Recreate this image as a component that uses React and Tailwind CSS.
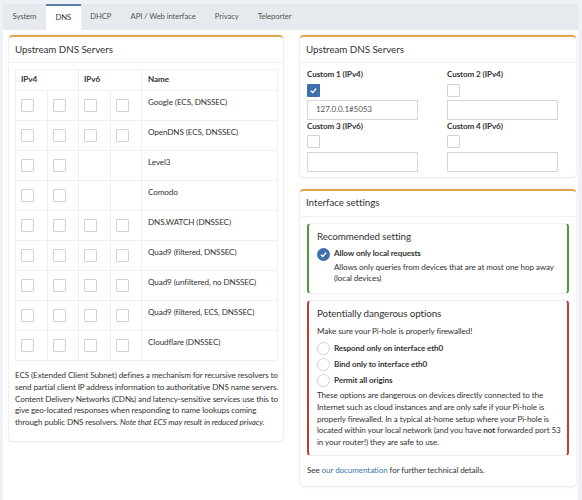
import React from 'react';

const tabs = ['System', 'DNS', 'DHCP', 'API / Web interface', 'Privacy', 'Teleporter'];

const servers = [
  { name: 'Google (ECS, DNSSEC)', v6: true },
  { name: 'OpenDNS (ECS, DNSSEC)', v6: true },
  { name: 'Level3', v6: false },
  { name: 'Comodo', v6: false },
  { name: 'DNS.WATCH (DNSSEC)', v6: true },
  { name: 'Quad9 (filtered, DNSSEC)', v6: true },
  { name: 'Quad9 (unfiltered, no DNSSEC)', v6: true },
  { name: 'Quad9 (filtered, ECS, DNSSEC)', v6: true },
  { name: 'Cloudflare (DNSSEC)', v6: true },
];

const Box = ({ title, children, className = '' }) => (
  <div
    className={`bg-white rounded-[4px] border-t-2 border-[#dea54b] shadow-[0_0_2px_rgba(0,0,0,0.12),0_1px_3px_rgba(0,0,0,0.08)] ${className}`}
  >
    <div className="h-[26px] flex items-center px-[6px] border-b border-[#f0f0f0] text-[9.8px] tracking-[-0.05px] text-[#333]">
      {title}
    </div>
    {children}
  </div>
);

const Tick = () => (
  <svg width="9" height="9" viewBox="0 0 10 10">
    <path d="M2 5.2 L4.2 7.2 L8 2.8" fill="none" stroke="white" strokeWidth="1.4" />
  </svg>
);

const Check = ({ checked }) =>
  checked ? (
    <span className="w-[13px] h-[13px] rounded-[1px] bg-[#3f70ad] flex items-center justify-center">
      <Tick />
    </span>
  ) : (
    <span className="block w-[13px] h-[13px] rounded-[1px] border border-[#d2d2d2] bg-white" />
  );

const Radio = ({ label }) => (
  <div className="flex items-center h-[16px]">
    <span className="w-[13px] h-[13px] rounded-full border border-[#d2d2d2] bg-white" />
    <span className="ml-[4px] font-bold">{label}</span>
  </div>
);

export default function App() {
  return (
    <div className="w-[582px] h-[500px] overflow-hidden bg-[#eef1f5] pt-[4px] pl-[3px] pr-[4px] font-['Lato',sans-serif] text-[8.1px] tracking-[-0.1px] text-[#333] leading-[11.8px]">
      <div className="bg-white h-full">
        {/* tabs */}
        <div className="flex h-[26px] bg-[#e6eaef] text-[7.7px]">
          {tabs.map((t) => (
            <div
              key={t}
              className={`px-[9.6px] flex items-center ${
                t === 'DNS' ? 'bg-white border-t-2 border-[#5a7ea8] text-[#333]' : 'text-[#555]'
              }`}
            >
              {t}
            </div>
          ))}
        </div>

        <div className="flex pl-[6px] pt-[5px] gap-[17px] items-start">
          {/* left column */}
          <Box title="Upstream DNS Servers" className="w-[274px] pb-[12px]">
            <div className="px-[6px] pt-[6px]">
              <table className="table-fixed border-collapse w-[263px]">
                <colgroup>
                  <col className="w-[32px]" />
                  <col className="w-[31px]" />
                  <col className="w-[32px]" />
                  <col className="w-[31px]" />
                  <col />
                </colgroup>
                <thead>
                  <tr className="h-[21px] font-bold">
                    <td colSpan={2} className="border border-[#efefef] pl-[5px]">IPv4</td>
                    <td colSpan={2} className="border border-[#efefef] pl-[5px]">IPv6</td>
                    <td className="border border-[#efefef] pl-[6px]">Name</td>
                  </tr>
                </thead>
                <tbody>
                  {servers.map((s) => (
                    <tr key={s.name} className="h-[30px]">
                      <td className="border border-[#efefef] pl-[5px] align-middle"><Check /></td>
                      <td className="border border-[#efefef] pl-[5px] align-middle"><Check /></td>
                      <td className="border border-[#efefef] pl-[5px] align-middle">{s.v6 && <Check />}</td>
                      <td className="border border-[#efefef] pl-[5px] align-middle">{s.v6 && <Check />}</td>
                      <td className="border border-[#efefef] pl-[6px] pt-[6px] align-top">{s.name}</td>
                    </tr>
                  ))}
                </tbody>
              </table>
              <p className="mt-[9px] w-[265px]">
                ECS (Extended Client Subnet) defines a mechanism for recursive resolvers to send partial
                client IP address information to authoritative DNS name servers. Content Delivery
                Networks (CDNs) and latency-sensitive services use this to give geo-located responses
                when responding to name lookups coming through public DNS resolvers.{' '}
                <i>Note that ECS may result in reduced privacy.</i>
              </p>
            </div>
          </Box>

          {/* right column */}
          <div className="w-[276px] flex flex-col gap-[12px]">
            <Box title="Upstream DNS Servers" className="pb-[5px]">
              <div className="grid grid-cols-[111px_111px] gap-x-[29px] px-[7px] pt-[6px]">
                {[
                  ['Custom 1 (IPv4)', true, '127.0.0.1#5053'],
                  ['Custom 2 (IPv4)', false, ''],
                  ['Custom 3 (IPv6)', false, ''],
                  ['Custom 4 (IPv6)', false, ''],
                ].map(([label, checked, val], i) => (
                  <div key={label} className={i > 1 ? 'mt-[1px]' : ''}>
                    <div className="font-bold">{label}</div>
                    <div className={i > 1 ? 'mt-[2px]' : 'mt-[3px]'}>
                      <Check checked={checked} />
                    </div>
                    <div
                      className={`${i > 1 ? 'mt-[4px]' : 'mt-[3px]'} h-[20px] border border-[#d2d6de] pl-[8px] flex items-center text-[#555]`}
                    >
                      {val}
                    </div>
                  </div>
                ))}
              </div>
            </Box>

            <Box title="Interface settings" className="pb-[9px]">
              <div className="px-[7px] pt-[6px]">
                <div className="rounded-[4px] border border-[#eeeeee] border-x-2 border-x-[#4e9a3d] pl-[8px] pr-[6px] pt-[5px] pb-[8px]">
                  <div className="text-[9.8px] leading-[14px]">Recommended setting</div>
                  <div className="flex items-center mt-[5px]">
                    <span className="w-[13px] h-[13px] rounded-full bg-[#3f70ad] flex items-center justify-center">
                      <Tick />
                    </span>
                    <span className="ml-[4px] font-bold">Allow only local requests</span>
                  </div>
                  <div className="pl-[17px] mt-[1px]">
                    Allows only queries from devices that are at most one hop away (local devices)
                  </div>
                </div>

                <div className="mt-[6px] rounded-[4px] border border-[#eeeeee] border-x-2 border-x-[#c73a2f] pl-[8px] pr-[4px] pt-[5px] pb-[6px]">
                  <div className="text-[9.8px] leading-[14px]">Potentially dangerous options</div>
                  <div className="mt-[6px]">Make sure your Pi-hole is properly firewalled!</div>
                  <div className="mt-[3px]">
                    <Radio label="Respond only on interface eth0" />
                    <Radio label="Bind only to interface eth0" />
                    <Radio label="Permit all origins" />
                  </div>
                  <p className="mt-[1px]">
                    These options are dangerous on devices directly connected to the Internet such as
                    cloud instances and are only safe if your Pi-hole is properly firewalled. In a
                    typical at-home setup where your Pi-hole is located within your local network (and
                    you have <b>not</b> forwarded port 53 in your router!) they are safe to use.
                  </p>
                </div>

                <div className="mt-[9px]">
                  See <span className="text-[#3a78b0]">our documentation</span> for further technical
                  details.
                </div>
              </div>
            </Box>
          </div>
        </div>
      </div>
    </div>
  );
}
